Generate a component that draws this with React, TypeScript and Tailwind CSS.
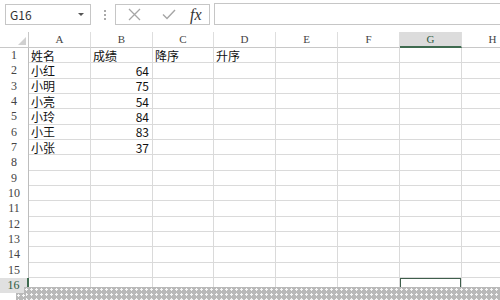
import type { ReactNode } from "react";

const COLS = ["A", "B", "C", "D", "E", "F", "G", "H"];
const WIDTHS = [62, 62, 61, 62, 62, 62, 62, 62];

const DATA: Record<number, [string, string, string, string]> = {
  1: ["姓名", "成绩", "降序", "升序"],
  2: ["小红", "64", "", ""],
  3: ["小明", "75", "", ""],
  4: ["小亮", "54", "", ""],
  5: ["小玲", "84", "", ""],
  6: ["小王", "83", "", ""],
  7: ["小张", "37", "", ""],
};

const font = { fontFamily: '"Noto Sans CJK SC", "Liberation Sans", sans-serif' };
const hatch =
  "absolute bottom-0 bg-[#b9b9b9] bg-[radial-gradient(circle,#f6f6f6_1px,transparent_1.3px)] bg-size-[5px_5px]";

function FormulaBar() {
  return (
    <div className="flex h-[32px] items-start pt-[3px] text-[12px]">
      <div className="ml-[5px] mt-[1px] flex h-[21px] w-[86px] items-center justify-between border border-[#c6c6c6] bg-white pl-[4px] pr-[6px] text-[#333]">
        <span>G16</span>
        <span className="h-0 w-0 border-x-[3px] border-t-[3px] border-x-transparent border-t-[#555]" />
      </div>
      <div className="ml-[13px] mt-[7px] flex w-[2px] flex-col gap-[2px]">
        <span className="h-[2px] w-[2px] bg-[#aaa]" />
        <span className="h-[2px] w-[2px] bg-[#aaa]" />
        <span className="h-[2px] w-[2px] bg-[#aaa]" />
      </div>
      <div className="ml-[9px] mt-[1px] flex h-[21px] w-[95px] items-center border border-[#c6c6c6] bg-white">
        <svg className="ml-[12px]" width="13" height="13" viewBox="0 0 13 13">
          <path d="M1 1 L12 12 M12 1 L1 12" stroke="#a6a6a6" strokeWidth="1.3" fill="none" />
        </svg>
        <svg className="ml-[21px]" width="14" height="11" viewBox="0 0 14 11">
          <path d="M1 5.5 L5 9.5 L13 1" stroke="#a6a6a6" strokeWidth="1.4" fill="none" />
        </svg>
        <span
          className="ml-[14px] text-[16px] italic leading-none text-[#333]"
          style={{ fontFamily: '"Liberation Serif", serif' }}
        >
          fx
        </span>
      </div>
      <div className="ml-[4px] h-[22px] flex-1 border-y border-l border-[#c6c6c6] bg-white" />
    </div>
  );
}

function Cell({ w, children, right, sel }: { w: number; children?: ReactNode; right?: boolean; sel?: boolean }) {
  return (
    <div
      className={`relative flex h-full shrink-0 items-center overflow-hidden border-b border-r border-[#dadada] text-[12px] leading-[13px] text-[#111] ${right ? "justify-end pr-[3px]" : "pl-[2px]"}`}
      style={{ width: w }}
    >
      {children}
      {sel && <div className="absolute -left-[1px] -top-[1px] -right-[1px] h-[20px] border-2 border-[#3f5f4c]" />}
    </div>
  );
}

export default function App() {
  const rows = Array.from({ length: 16 }, (_, i) => i + 1);
  return (
    <div className="relative h-[300px] w-[500px] overflow-hidden bg-white" style={font}>
      <FormulaBar />
      <div className="flex h-[16px] text-[11px] text-[#444]">
        <div className="flex w-[29px] shrink-0 items-end justify-end border-b border-r border-[#c8c8c8] pb-[2px] pr-[2px]">
          <svg width="8" height="8" viewBox="0 0 8 8">
            <path d="M8 0 L8 8 L0 8 Z" fill="#d0d0d0" />
          </svg>
        </div>
        {COLS.map((c, i) => (
          <div
            key={c}
            className={`flex shrink-0 items-center justify-center border-r ${c === "G" ? "border-b-2 border-b-[#3f6b50] bg-[#dcdcdc] text-[#2c5a3f]" : "border-b border-b-[#c8c8c8]"} border-r-[#dedede]`}
            style={{ width: WIDTHS[i], fontFamily: '"Liberation Serif", serif' }}
          >
            {c}
          </div>
        ))}
      </div>
      {rows.map((r) => {
        const d = DATA[r];
        return (
          <div key={r} className="flex h-[15.33px]">
            <div
              className={`flex w-[29px] shrink-0 items-center justify-center text-[12px] leading-[13px] ${r === 16 ? "border-r-2 border-[#3f6b50] bg-[#e0e0e0] text-[#2c5a3f]" : "border-r border-[#bdbdbd] text-[#444]"}`}
              style={{ fontFamily: '"Liberation Serif", serif' }}
            >
              {r}
            </div>
            {WIDTHS.map((w, i) => {
              const v = d && i < 4 ? d[i] : "";
              return (
                <Cell key={i} w={w} right={/^\d+$/.test(v)} sel={r === 16 && i === 6}>
                  {v}
                </Cell>
              );
            })}
          </div>
        );
      })}
      <div className={`${hatch} left-[24px] right-0 top-[287px]`} />
      <div className={`${hatch} left-[16px] top-[293px] w-[10px]`} />
    </div>
  );
}
